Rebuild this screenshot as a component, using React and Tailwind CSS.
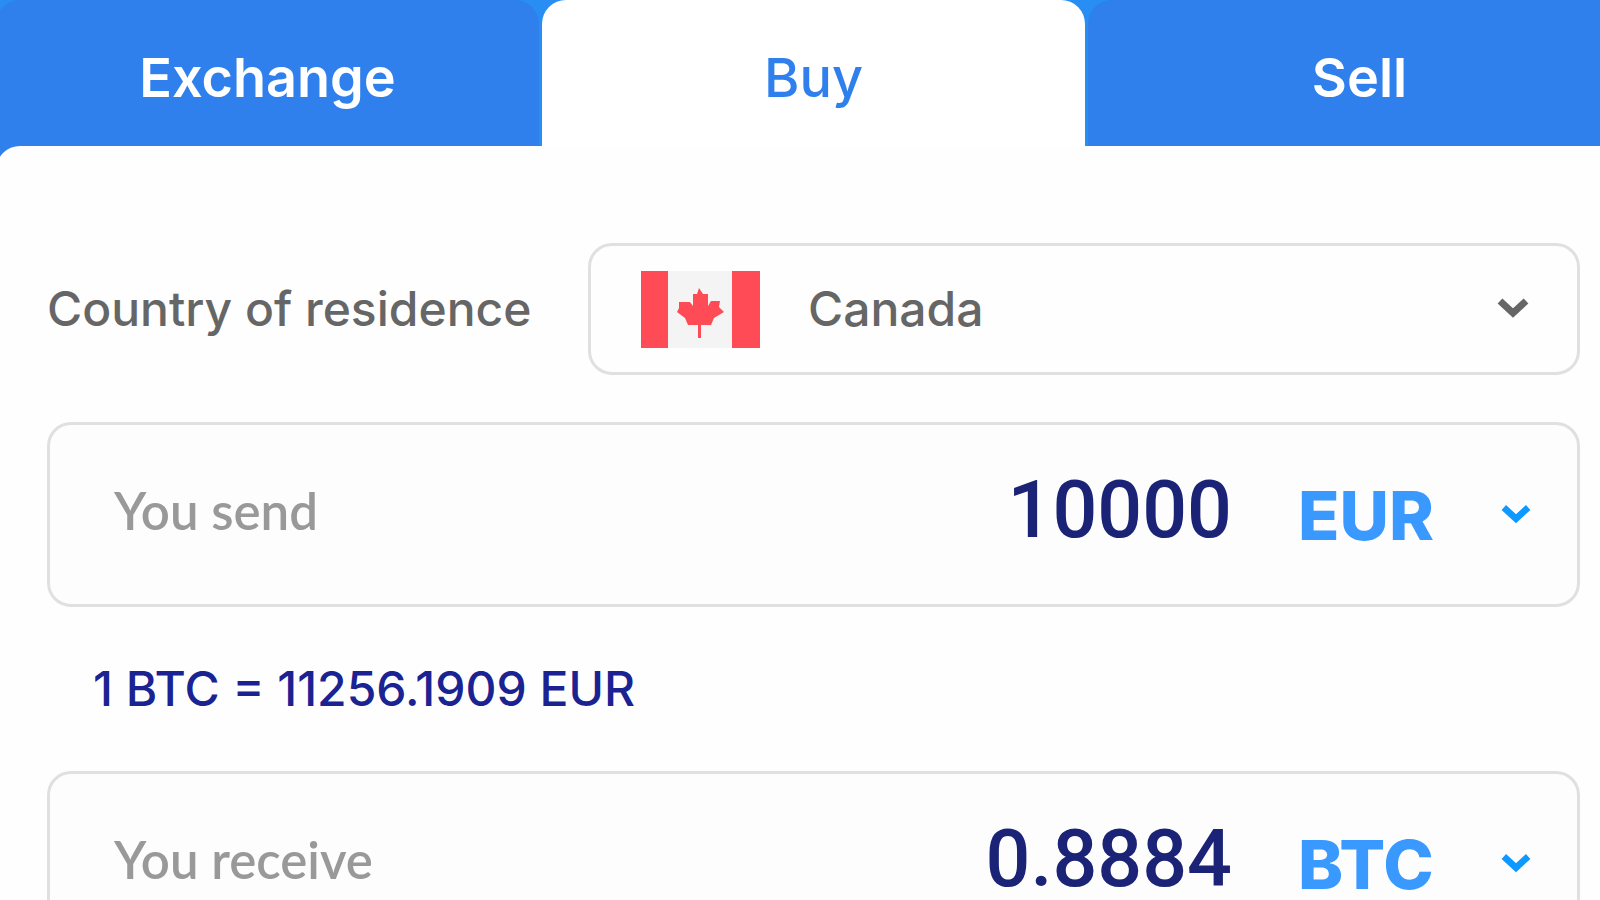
import { useState } from "react";

const tabs = ["Exchange", "Buy", "Sell"];

const Chevron = ({ className }) => (
  <svg
    className={className}
    viewBox="0 0 32 22"
    fill="none"
    stroke="currentColor"
    strokeWidth="7"
    aria-hidden="true"
  >
    <path d="M3 3l13 12L29 3" />
  </svg>
);

const CanadaFlag = () => (
  <svg className="w-[119px] h-[77px] shrink-0" viewBox="0 0 119 77" aria-hidden="true">
    <path fill="#f4f4f4" d="M0 0h119v77H0z" />
    <path fill="#ff4b55" d="M0 0h27v77H0zM91 0h28v77H91z" />
    <path
      fill="#ff4b55"
      d="M58 17l4 6h5v12l3-5h9l-1 6 5 5-10 6-3 7H60v13h-3V54H47l-3-7-8-6 2-4v-6h11l3 4V23h4z"
    />
  </svg>
);

const AmountField = ({ id, label, value, onChange, currency, options }) => (
  <div className="flex items-center h-[185px] border-3 border-[#e0e0e0] rounded-3xl bg-[#fdfdfd] pl-16 pr-[46px]">
    <label htmlFor={id} className="shrink-0 pb-2 font-['Lato'] font-semibold text-[51px] leading-[60px] text-[#999999]">
      {label}
    </label>
    <input
      id={id}
      type="text"
      value={value}
      onChange={onChange}
      className="flex-1 min-w-0 h-24 pb-2 text-right font-['Roboto'] font-medium text-[79px] text-[#1a2375] outline-none"
    />
    <div className="flex items-center ml-[66px] text-[#3999ff]">
      <select
        aria-label={`${label} currency`}
        defaultValue={currency}
        className="appearance-none w-[203px] h-20 font-extrabold text-[68px] leading-[80px] outline-none"
      >
        {options.map((option) => (
          <option key={option}>{option}</option>
        ))}
      </select>
      <Chevron className="w-[30px] h-[22px] text-[#0d99ff]" />
    </div>
  </div>
);

const App = () => {
  const [active, setActive] = useState("Buy");
  const [send, setSend] = useState("10000");
  const [receive, setReceive] = useState("0.8884");

  return (
    <div className="min-h-screen overflow-hidden bg-[#288ef3] font-['Inter',sans-serif]">
      <div className="grid grid-cols-3 gap-[3px] -ml-1 w-[calc(102%+3px)]">
        {tabs.map((tab) => (
          <button
            key={tab}
            type="button"
            onClick={() => setActive(tab)}
            className={`h-[146px] pt-2 rounded-t-3xl text-[54px] ${
              active === tab
                ? "bg-white text-[#2f80ed] font-medium"
                : "bg-[#2f80ed] text-white font-semibold"
            }`}
          >
            {tab}
          </button>
        ))}
      </div>

      <div className="bg-[#2f80ed]">
        <div className="-ml-1 pl-[51px] pr-5 pt-[97px] pb-12 rounded-tl-3xl bg-[#fefefe]">
          <div className="flex items-center justify-between gap-6">
            <label htmlFor="country" className="font-medium text-[48px] text-[#666666] whitespace-nowrap">
              Country of residence
            </label>
            <div className="flex items-center w-[992px] h-[132px] border-3 border-[#e0e0e0] rounded-3xl pl-[50px] pr-12 text-[#666666]">
              <CanadaFlag />
              <select
                id="country"
                defaultValue="Canada"
                className="appearance-none flex-1 min-w-0 h-20 ml-12 font-medium text-[48px] leading-[80px] outline-none"
              >
                <option>Canada</option>
                <option>France</option>
                <option>Germany</option>
              </select>
              <Chevron className="w-8 h-[22px]" />
            </div>
          </div>

          <div className="mt-[47px]">
            <AmountField
              id="send"
              label="You send"
              value={send}
              onChange={(e) => setSend(e.target.value)}
              currency="EUR"
              options={["EUR", "USD"]}
            />
          </div>

          <p className="pl-[46px] py-[50px] font-medium text-[48px] leading-[64px] text-[#1a2391]">
            1 BTC = 11256.1909 EUR
          </p>

          <AmountField
            id="receive"
            label="You receive"
            value={receive}
            onChange={(e) => setReceive(e.target.value)}
            currency="BTC"
            options={["BTC", "ETH"]}
          />
        </div>
      </div>
    </div>
  );
};

export default App;
